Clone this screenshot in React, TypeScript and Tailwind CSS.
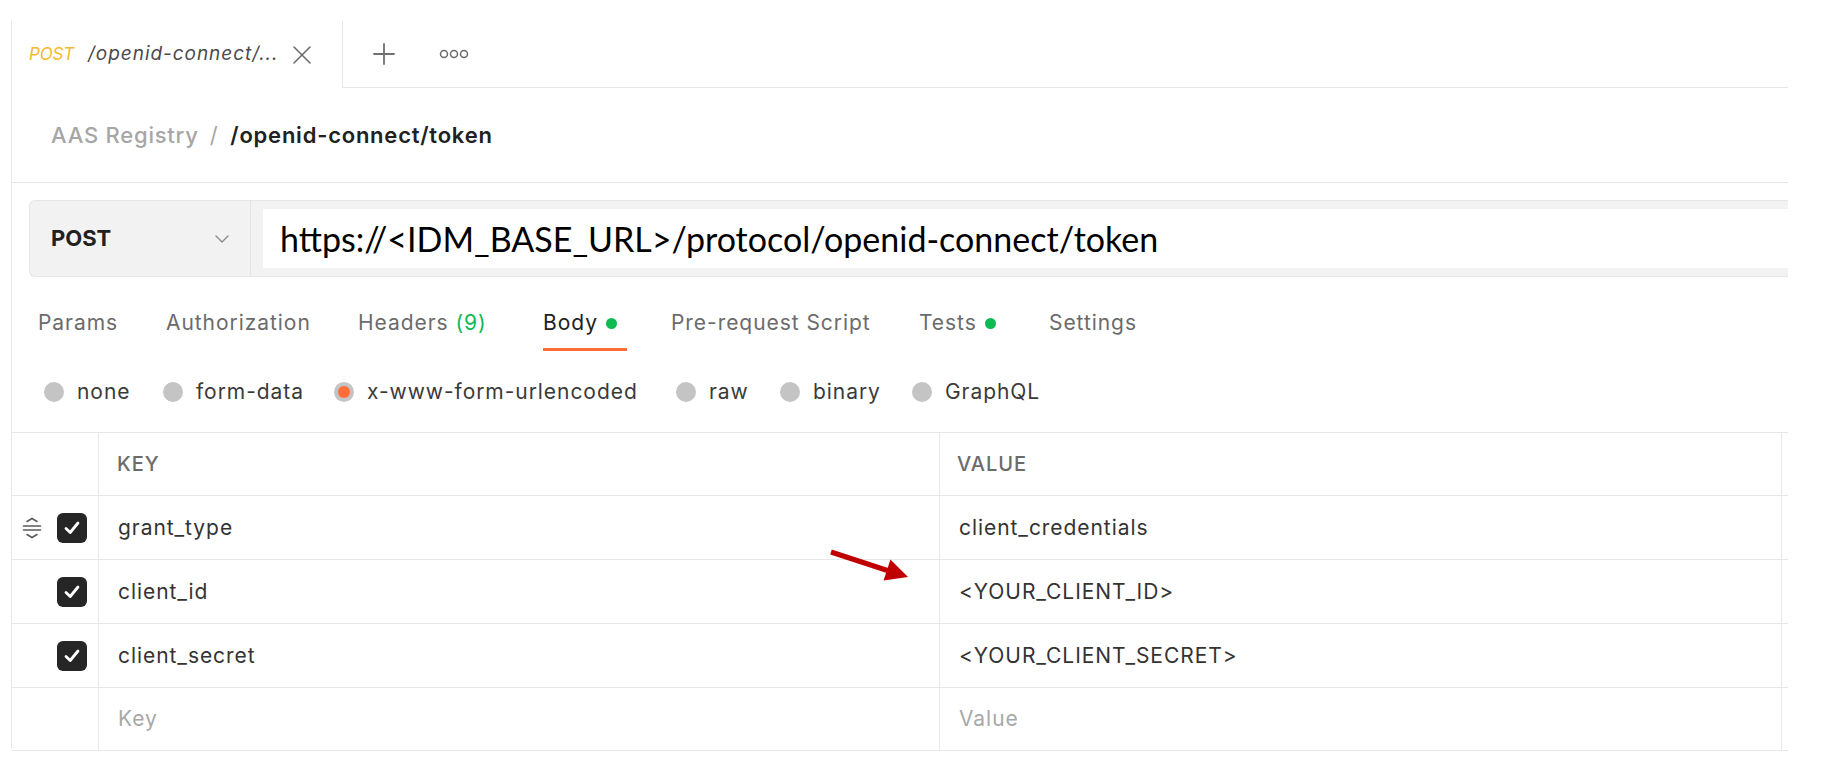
import React from "react";

const Check = () => (
  <div className="w-[30px] h-[30px] rounded-[6px] bg-[#262626] flex items-center justify-center">
    <svg width="20" height="20" viewBox="0 0 20 20" fill="none">
      <path d="M4 10.5 L8.2 14.5 L16 5" stroke="white" strokeWidth="2.8" strokeLinecap="round" strokeLinejoin="round" />
    </svg>
  </div>
);

const Drag = () => (
  <svg width="22" height="26" viewBox="0 0 22 26" fill="none" stroke="#5a5a5a" strokeWidth="1.5" strokeLinecap="round" strokeLinejoin="round">
    <path d="M6 6.5 L11 3.5 L16 6.5" />
    <path d="M2.5 11 H19.5" />
    <path d="M2.5 15 H19.5" />
    <path d="M6 19.5 L11 22.5 L16 19.5" />
  </svg>
);

const Radio = ({ selected }: { selected?: boolean }) =>
  selected ? (
    <div className="w-[20px] h-[20px] rounded-full bg-[#c4c4c4] flex items-center justify-center">
      <div className="w-[12px] h-[12px] rounded-full bg-[#ff6c37]" />
    </div>
  ) : (
    <div className="w-[20px] h-[20px] rounded-full bg-[#c4c4c4]" />
  );

export default function App() {
  const rows = [
    { k: "grant_type", v: "client_credentials", drag: true },
    { k: "client_id", v: "<YOUR_CLIENT_ID>" },
    { k: "client_secret", v: "<YOUR_CLIENT_SECRET>" },
  ];
  return (
    <div className="w-[1824px] h-[774px] bg-white relative font-['Inter',sans-serif] text-[#212121] overflow-hidden">
      <div className="ml-[11px] mt-[21px] w-[1777px] h-[728px] border-l border-[#e8e8e8] flex flex-col">
        {/* Tab bar */}
        <div className="h-[67px] flex shrink-0">
          <div className="w-[331px] border-r border-[#e8e8e8] flex items-center pl-[17px]">
            <span className="text-[17px] italic text-[#f5b82e] tracking-[-0.01em]">POST</span>
            <span className="ml-[14px] text-[19px] italic text-[#4a4a4a] tracking-[0.05em]">/openid-connect/...</span>
            <svg className="ml-[13px]" width="22" height="22" viewBox="0 0 22 22" stroke="#6b6b6b" strokeWidth="1.6" strokeLinecap="round">
              <path d="M3 3 L19 19 M19 3 L3 19" />
            </svg>
          </div>
          <div className="flex-1 border-b border-[#e8e8e8] flex items-center">
            <svg className="ml-[29px]" width="24" height="24" viewBox="0 0 24 24" stroke="#707070" strokeWidth="1.8" strokeLinecap="round">
              <path d="M12 2 V22 M2 12 H22" />
            </svg>
            <svg className="ml-[43px]" width="30" height="10" viewBox="0 0 30 10" fill="none" stroke="#6b6b6b" strokeWidth="1.5">
              <circle cx="5" cy="5" r="3.5" />
              <circle cx="15" cy="5" r="3.5" />
              <circle cx="25" cy="5" r="3.5" />
            </svg>
          </div>
        </div>

        {/* Breadcrumb */}
        <div className="h-[95px] shrink-0 border-b border-[#e8e8e8] flex items-center pl-[39px] text-[22px] tracking-[0.035em]">
          <span className="text-[#a6a6a6] font-medium">AAS Registry</span>
          <span className="ml-[11px] text-[#a6a6a6]">/</span>
          <span className="ml-[12px] font-semibold text-[#212121]">/openid-connect/token</span>
        </div>

        {/* URL bar */}
        <div className="pt-[17px] shrink-0 pl-[17px]">
          <div className="h-[77px] rounded-l-[6px] bg-[#f2f2f2] border border-r-0 border-[#e6e6e6] flex">
            <div className="w-[221px] border-r border-[#e3e3e3] flex items-center pl-[21px] pr-[20px] justify-between">
              <span className="text-[22px] font-bold text-[#212121]">POST</span>
              <svg width="16" height="10" viewBox="0 0 16 10" fill="none" stroke="#8a8a8a" strokeWidth="1.4" strokeLinecap="round" strokeLinejoin="round">
                <path d="M2 2 L8 8 L14 2" />
              </svg>
            </div>
            <div className="flex-1 ml-[12px] my-[8px] bg-white flex items-center pl-[17px]">
              <span className="font-['Lato',sans-serif] text-[34px] text-black leading-none">https://&lt;IDM_BASE_URL&gt;/protocol/openid-connect/token</span>
            </div>
          </div>
        </div>

        {/* Tabs */}
        <div className="h-[75px] shrink-0 flex pl-[26px] pt-[34px] text-[21px] tracking-[0.045em] text-[#6b6b6b]">
          <div className="w-[128px] flex flex-col"><span className="h-[24px] leading-[24px]">Params</span></div>
          <div className="w-[192px] flex flex-col"><span className="h-[24px] leading-[24px]">Authorization</span></div>
          <div className="w-[185px] flex flex-col">
            <span className="h-[24px] leading-[24px]">Headers <span className="text-[#0cbb52]">(9)</span></span>
          </div>
          <div className="w-[128px] flex flex-col items-start">
            <span className="h-[24px] leading-[24px] text-[#212121] flex items-center">
              Body<span className="ml-[8px] w-[11px] h-[11px] rounded-full bg-[#0cbb52] inline-block" />
            </span>
            <div className="mt-[13px] h-[3px] w-[84px] bg-[#ff6c37]" />
          </div>
          <div className="w-[248px] flex flex-col"><span className="h-[24px] leading-[24px]">Pre-request Script</span></div>
          <div className="w-[130px] flex flex-col">
            <span className="h-[24px] leading-[24px] flex items-center">
              Tests<span className="ml-[8px] w-[11px] h-[11px] rounded-full bg-[#0cbb52] inline-block" />
            </span>
          </div>
          <div className="flex flex-col"><span className="h-[24px] leading-[24px]">Settings</span></div>
        </div>

        {/* Radios */}
        <div className="h-[80px] shrink-0 flex items-center pl-[32px] text-[21px] tracking-[0.045em] text-[#3a3a3a]">
          {[
            { l: "none", w: "w-[119px]" },
            { l: "form-data", w: "w-[171px]" },
            { l: "x-www-form-urlencoded", w: "w-[342px]", s: true },
            { l: "raw", w: "w-[104px]" },
            { l: "binary", w: "w-[132px]" },
            { l: "GraphQL", w: "" },
          ].map((r) => (
            <div key={r.l} className={`${r.w} flex items-center`}>
              <Radio selected={r.s} />
              <span className="ml-[13px]">{r.l}</span>
            </div>
          ))}
        </div>

        {/* Table */}
        <div className="relative">
          <div className="border-t border-[#e8e8e8]">
            <div className="flex h-[63px] border-b border-[#e8e8e8] text-[20px] tracking-[0.05em] text-[#6b6b6b] font-medium">
              <div className="w-[87px] border-r border-[#e8e8e8]" />
              <div className="w-[841px] border-r border-[#e8e8e8] flex items-center pl-[18px]">KEY</div>
              <div className="w-[842px] border-r border-[#e8e8e8] flex items-center pl-[17px]">VALUE</div>
              <div className="flex-1" />
            </div>
            {rows.map((r) => (
              <div key={r.k} className="flex h-[64px] border-b border-[#e8e8e8] text-[21px] tracking-[0.045em] text-[#333333]">
                <div className="w-[87px] border-r border-[#e8e8e8] flex items-center pl-[9px]">
                  <div className="w-[22px]">{r.drag ? <Drag /> : null}</div>
                  <div className="ml-[14px]"><Check /></div>
                </div>
                <div className="w-[841px] border-r border-[#e8e8e8] flex items-center pl-[19px]">{r.k}</div>
                <div className="w-[842px] border-r border-[#e8e8e8] flex items-center pl-[19px]">{r.v}</div>
                <div className="flex-1" />
              </div>
            ))}
            <div className="flex h-[63px] border-b border-[#e8e8e8] text-[21px] tracking-[0.045em] text-[#a8a8a8]">
              <div className="w-[87px] border-r border-[#e8e8e8]" />
              <div className="w-[841px] border-r border-[#e8e8e8] flex items-center pl-[19px]">Key</div>
              <div className="w-[842px] border-r border-[#e8e8e8] flex items-center pl-[19px]">Value</div>
              <div className="flex-1" />
            </div>
          </div>
          {/* red arrow */}
          <svg className="absolute left-[809px] top-[108px]" width="100" height="50" viewBox="0 0 100 50" fill="none">
            <path d="M10 12 L68 31" stroke="#c00000" strokeWidth="5" strokeLinecap="butt" />
            <path d="M87 37 L62.6 40.5 L69.4 19.5 Z" fill="#c00000" />
          </svg>
        </div>
      </div>
    </div>
  );
}
